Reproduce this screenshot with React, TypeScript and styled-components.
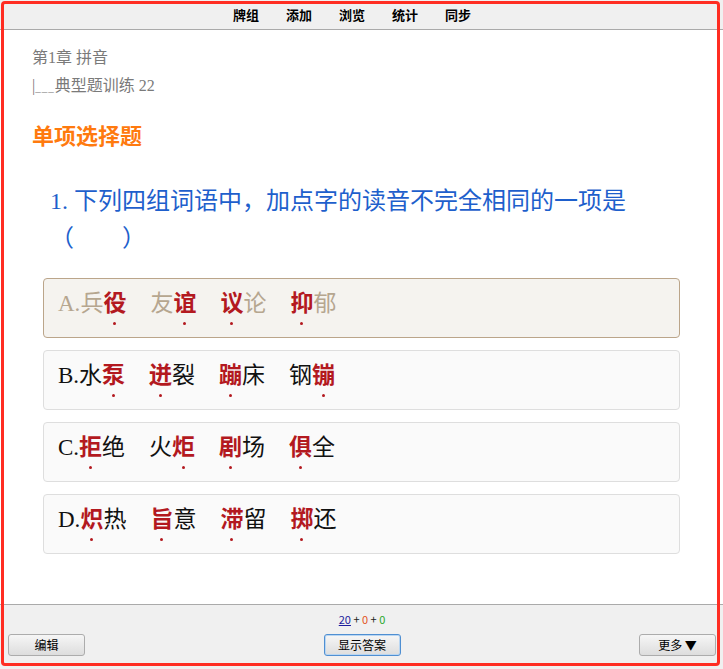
import styled, { createGlobalStyle } from 'styled-components';

const GlobalStyle = createGlobalStyle`
	html, body {
		margin: 0;
		padding: 0;
		height: 100%;
		background: #fff;
	}
	#root {
		height: 100%;
	}
`;

type Part = { text: string; dot?: boolean };
type Option = { label: string; words: Part[][] };

const options: Option[] = [
	{
		label: 'A.',
		words: [
			[{ text: '兵' }, { text: '役', dot: true }],
			[{ text: '友' }, { text: '谊', dot: true }],
			[{ text: '议', dot: true }, { text: '论' }],
			[{ text: '抑', dot: true }, { text: '郁' }],
		],
	},
	{
		label: 'B.',
		words: [
			[{ text: '水' }, { text: '泵', dot: true }],
			[{ text: '迸', dot: true }, { text: '裂' }],
			[{ text: '蹦', dot: true }, { text: '床' }],
			[{ text: '钢' }, { text: '镚', dot: true }],
		],
	},
	{
		label: 'C.',
		words: [
			[{ text: '拒', dot: true }, { text: '绝' }],
			[{ text: '火' }, { text: '炬', dot: true }],
			[{ text: '剧', dot: true }, { text: '场' }],
			[{ text: '俱', dot: true }, { text: '全' }],
		],
	},
	{
		label: 'D.',
		words: [
			[{ text: '炽', dot: true }, { text: '热' }],
			[{ text: '旨', dot: true }, { text: '意' }],
			[{ text: '滞', dot: true }, { text: '留' }],
			[{ text: '掷', dot: true }, { text: '还' }],
		],
	},
];

const navItems = ['牌组', '添加', '浏览', '统计', '同步'];

function App() {
	return (
		<Page>
			<GlobalStyle />
			<TopBar>
				{navItems.map((item) => (
					<NavLink key={item}>{item}</NavLink>
				))}
			</TopBar>
			<Content>
				<Crumb>第1章 拼音</Crumb>
				<Crumb>
					|<Dashes>___</Dashes>典型题训练 22
				</Crumb>
				<SectionTitle>单项选择题</SectionTitle>
				<Question>1. 下列四组词语中，加点字的读音不完全相同的一项是（　　）</Question>
				<OptionList>
					{options.map((opt, i) => (
						<OptionBox key={opt.label} selected={i === 0}>
							<span>{opt.label}</span>
							{opt.words.map((word, j) => (
								<Word key={j}>
									{word.map((p, k) =>
										p.dot ? (
											<Dotted key={k}>{p.text}</Dotted>
										) : (
											<span key={k}>{p.text}</span>
										)
									)}
								</Word>
							))}
						</OptionBox>
					))}
				</OptionList>
			</Content>
			<Footer>
				<Stats>
					<DueLink>20</DueLink>
					<Plus> + </Plus>
					<Count color='#e2531c'>0</Count>
					<Plus> + </Plus>
					<Count color='#2aa82a'>0</Count>
				</Stats>
				<ButtonRow>
					<Button>编辑</Button>
					<Button primary>显示答案</Button>
					<Button>更多 ▼</Button>
				</ButtonRow>
			</Footer>
			<Frame />
		</Page>
	);
}

const Page = styled.div`
	display: flex;
	flex-direction: column;
	height: 100vh;
	font-family: 'Liberation Serif', 'Noto Sans CJK SC', serif;
`;

const TopBar = styled.div`
	flex: none;
	height: 29px;
	display: flex;
	justify-content: center;
	align-items: center;
	gap: 27px;
	padding-right: 19px;
	background: #f0f0f0;
	border-bottom: 1px solid #aaa;
`;

const NavLink = styled.span`
	font-family: 'Noto Sans CJK SC', sans-serif;
	font-size: 13px;
	font-weight: 700;
	color: #000;
	line-height: 16px;
`;

const Content = styled.div`
	flex: 1;
	padding: 14px 32px 0;
	overflow: hidden;
`;

const Crumb = styled.div`
	font-size: 16px;
	line-height: 28px;
	color: #7a7a7a;
`;

const Dashes = styled.span`
	font-size: 11px;
	letter-spacing: 1px;
`;

const SectionTitle = styled.div`
	margin-top: 19px;
	font-family: 'Noto Sans CJK SC', sans-serif;
	font-size: 22px;
	font-weight: 700;
	line-height: 28px;
	color: #ff7a0e;
`;

const Question = styled.div`
	margin-top: 35px;
	padding: 0 40px 0 18px;
	font-size: 24px;
	line-height: 37px;
	color: #1e5fcc;
`;

const OptionList = styled.div`
	margin: 21px 11px 0;
	display: flex;
	flex-direction: column;
	gap: 12px;
`;

const OptionBox = styled.div<{ selected?: boolean }>`
	box-sizing: border-box;
	height: 60px;
	padding: 10px 14px 0;
	font-size: 23px;
	line-height: 30px;
	border-radius: 4px;
	border: 1px solid ${(p) => (p.selected ? '#bba58a' : '#dedede')};
	background: ${(p) => (p.selected ? '#f5f3ef' : '#fafafa')};
	color: ${(p) => (p.selected ? '#b6a68f' : '#111')};
	white-space: nowrap;
`;

const Word = styled.span`
	display: inline-block;
	margin-right: 24px;
`;

const Dotted = styled.span`
	position: relative;
	color: #b3191f;
	font-weight: 700;
	&::after {
		content: '';
		position: absolute;
		left: 50%;
		top: 31px;
		width: 3px;
		height: 3px;
		margin-left: -1.5px;
		border-radius: 50%;
		background: #b3191f;
	}
`;

const Footer = styled.div`
	flex: none;
	height: 65px;
	box-sizing: border-box;
	border-top: 1px solid #aaa;
	background: #f0f0f0;
	padding: 7px 7px 0 8px;
	display: flex;
	flex-direction: column;
	font-family: 'Noto Sans CJK SC', sans-serif;
`;

const Stats = styled.div`
	text-align: center;
	font-size: 11px;
	line-height: 14px;
`;

const DueLink = styled.span`
	color: #1c1c9c;
	text-decoration: underline;
`;

const Plus = styled.span`
	color: #222;
`;

const Count = styled.span<{ color: string }>`
	color: ${(p) => p.color};
`;

const ButtonRow = styled.div`
	margin-top: 8px;
	display: flex;
	justify-content: space-between;
	align-items: center;
`;

const Button = styled.button<{ primary?: boolean }>`
	box-sizing: border-box;
	width: 77px;
	height: 22px;
	padding: 0;
	font-family: 'Noto Sans CJK SC', sans-serif;
	font-size: 12px;
	line-height: 18px;
	color: #000;
	border-radius: 3px;
	border: 1px solid ${(p) => (p.primary ? '#4f8fd2' : '#acacac')};
	background: linear-gradient(#f6f6f6, #dddddd);
	box-shadow: ${(p) => (p.primary ? 'inset 0 0 0 1px #b9d6f2' : 'none')};
`;

const Frame = styled.div`
	position: fixed;
	left: 1px;
	top: 1px;
	right: 3px;
	bottom: 3px;
	border: 3px solid #ff2d22;
	border-radius: 4px;
	pointer-events: none;
`;

export default App;
